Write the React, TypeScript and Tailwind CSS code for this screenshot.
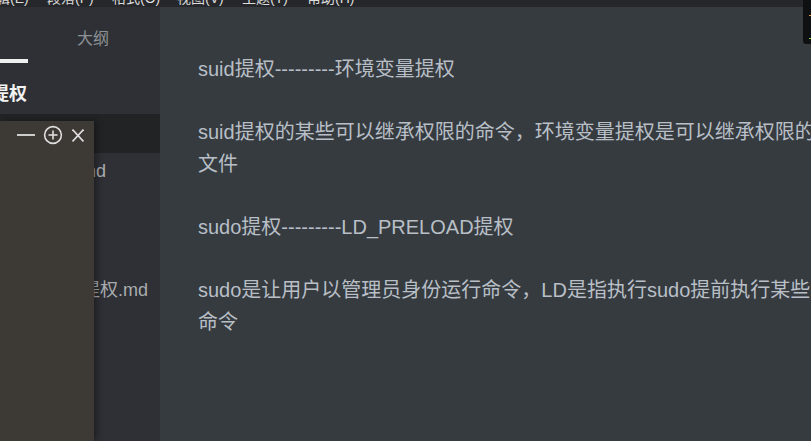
import React from 'react';

const menus = ['编辑(E)', '段落(P)', '格式(O)', '视图(V)', '主题(T)', '帮助(H)'];

const font = { fontFamily: '"Liberation Sans", "Noto Sans CJK SC", sans-serif' };

const App = () => {
  return (
    <div className="relative w-[811px] h-[441px] overflow-hidden bg-[#363b40]" style={font}>
      {/* menu bar, mostly scrolled off the top */}
      <div className="h-[7px] bg-[#26272b] overflow-hidden flex">
        <div className="flex -mt-[9px] -ml-[18px]">
          {menus.map((m) => (
            <span key={m} className="w-[65px] shrink-0 text-[14px] leading-[14px] text-[#dcdcdc]">
              {m}
            </span>
          ))}
        </div>
      </div>

      <div className="flex h-[434px]">
        {/* sidebar */}
        <aside className="w-[160px] shrink-0 bg-[#2e3035] flex flex-col">
          <div className="relative h-[56px] flex">
            <span className="ml-[77px] mt-[22px] text-[16px] leading-[20px] text-[#8d9094]">大纲</span>
            <div className="absolute left-0 top-[52px] w-[28px] h-[4px] bg-[#f0f0f0]" />
          </div>
          <div className="h-[51px] flex items-center -ml-[9px] pt-[10px]">
            <span className="text-[18px] leading-[24px] font-bold text-[#f2f2f2]">提权</span>
          </div>
          <div className="h-[39px] bg-[#222325]" />
          <div className="h-[36px] flex items-center -ml-[32px]">
            <span className="text-[18px] leading-[24px] text-[#a9acaf] whitespace-nowrap">环境变量提权.md</span>
          </div>
          <div className="h-[83px]" />
          <div className="h-[36px] flex items-center ml-[10px]">
            <span className="text-[18px] leading-[24px] text-[#a9acaf] whitespace-nowrap">环境变量提权.md</span>
          </div>
        </aside>

        {/* editor */}
        <main className="flex-1 pt-[46px] pl-[38px] text-[20px] leading-[32px] text-[#b8bfc6] whitespace-nowrap overflow-hidden">
          <p className="mb-[31px]">suid提权---------环境变量提权</p>
          <p className="mb-[31px]">
            suid提权的某些可以继承权限的命令，环境变量提权是可以继承权限的
            <br />
            文件
          </p>
          <p className="mb-[31px]">sudo提权---------LD_PRELOAD提权</p>
          <p>
            sudo是让用户以管理员身份运行命令，LD是指执行sudo提前执行某些
            <br />
            命令
          </p>
        </main>
      </div>

      {/* floating panel over the sidebar */}
      <div className="absolute left-0 top-[121px] w-[94px] h-[320px] bg-[#3d3a35] shadow-[3px_0_6px_rgba(0,0,0,0.35)]">
        <div className="flex items-center h-[28px] pl-[17px] text-[#dedede]">
          <svg width="18" height="18" viewBox="0 0 18 18" fill="none" stroke="currentColor" strokeWidth="1.8">
            <line x1="0" y1="9" x2="18" y2="9" />
          </svg>
          <svg className="ml-[8px]" width="20" height="20" viewBox="0 0 20 20" fill="none" stroke="currentColor" strokeWidth="1.6">
            <circle cx="10" cy="10" r="8.4" />
            <line x1="10" y1="5.5" x2="10" y2="14.5" />
            <line x1="5.5" y1="10" x2="14.5" y2="10" />
          </svg>
          <svg className="ml-[9px]" width="12" height="13" viewBox="0 0 12 13" fill="none" stroke="currentColor" strokeWidth="1.6">
            <line x1="0.5" y1="0.5" x2="11.5" y2="12.5" />
            <line x1="11.5" y1="0.5" x2="0.5" y2="12.5" />
          </svg>
        </div>
      </div>

      {/* dark widget on the top right */}
      <div className="absolute right-0 top-0 w-[8px] h-[44px] bg-[#0f1011] rounded-bl-[3px]">
        <div className="absolute right-0 top-[15px] w-[2px] h-[1px] bg-[#e39a3b]" />
        <div className="absolute right-0 top-[38px] w-[2px] h-[1px] bg-[#7bd13a]" />
      </div>
    </div>
  );
};

export default App;
